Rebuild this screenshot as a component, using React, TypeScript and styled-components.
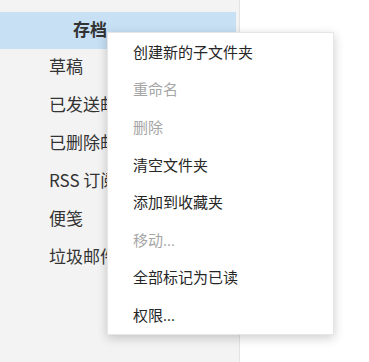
import styled, { createGlobalStyle } from "styled-components";

const GlobalStyle = createGlobalStyle`
  html, body {
    margin: 0;
    padding: 0;
    background: #ffffff;
  }
  body {
    font-family: "Open Sans", "Noto Sans CJK SC", sans-serif;
  }
`;

const folders = [
  { name: "存档", selected: true },
  { name: "草稿" },
  { name: "已发送邮件" },
  { name: "已删除邮件" },
  { name: "RSS 订阅" },
  { name: "便笺" },
  { name: "垃圾邮件" },
];

const menuItems = [
  { label: "创建新的子文件夹" },
  { label: "重命名", disabled: true },
  { label: "删除", disabled: true },
  { label: "清空文件夹" },
  { label: "添加到收藏夹" },
  { label: "移动...", disabled: true },
  { label: "全部标记为已读" },
  { label: "权限..." },
];

export default function App() {
  return (
    <>
      <GlobalStyle />
      <Page>
        <Sidebar>
          {folders.map((f) => (
            <FolderRow key={f.name} $selected={!!f.selected}>
              {f.name}
            </FolderRow>
          ))}
        </Sidebar>
        <Main />
        <ContextMenu>
          {menuItems.map((m) => (
            <MenuItem key={m.label} $disabled={!!m.disabled}>
              {m.label}
            </MenuItem>
          ))}
        </ContextMenu>
      </Page>
    </>
  );
}

const Page = styled.div`
  position: relative;
  display: flex;
  width: 369px;
  height: 362px;
  overflow: hidden;
`;

const Sidebar = styled.nav`
  width: 240px;
  flex-shrink: 0;
  background: #f3f3f3;
  border-right: 1px solid #e3e3e3;
  padding: 12px 3px 0 0;
  box-sizing: border-box;
`;

const FolderRow = styled.div<{ $selected: boolean }>`
  height: ${(p) => (p.$selected ? "37px" : "38px")};
  box-sizing: border-box;
  display: flex;
  align-items: center;
  padding-left: ${(p) => (p.$selected ? "73px" : "49px")};
  padding-bottom: ${(p) => (p.$selected ? "3px" : "4px")};
  font-family: "Noto Sans CJK SC", "Open Sans", sans-serif;
  font-size: 17px;
  line-height: 20px;
  font-weight: ${(p) => (p.$selected ? 700 : 400)};
  color: #333333;
  background: ${(p) => (p.$selected ? "#c7e0f4" : "transparent")};
  white-space: nowrap;
  overflow: hidden;
`;

const Main = styled.main`
  flex: 1;
  background: #ffffff;
`;

const ContextMenu = styled.ul`
  position: absolute;
  left: 107px;
  top: 32px;
  width: 227px;
  margin: 0;
  padding: 0;
  list-style: none;
  background: #ffffff;
  border: 1px solid #e6e6e6;
  box-sizing: border-box;
  box-shadow: 0 3px 10px rgba(0, 0, 0, 0.2);
`;

const MenuItem = styled.li<{ $disabled: boolean }>`
  height: 37.6px;
  box-sizing: border-box;
  display: flex;
  align-items: center;
  padding-left: 25px;
  padding-bottom: 1px;
  font-size: 15px;
  color: ${(p) => (p.$disabled ? "#a6a6a6" : "#262626")};
  white-space: nowrap;
`;
